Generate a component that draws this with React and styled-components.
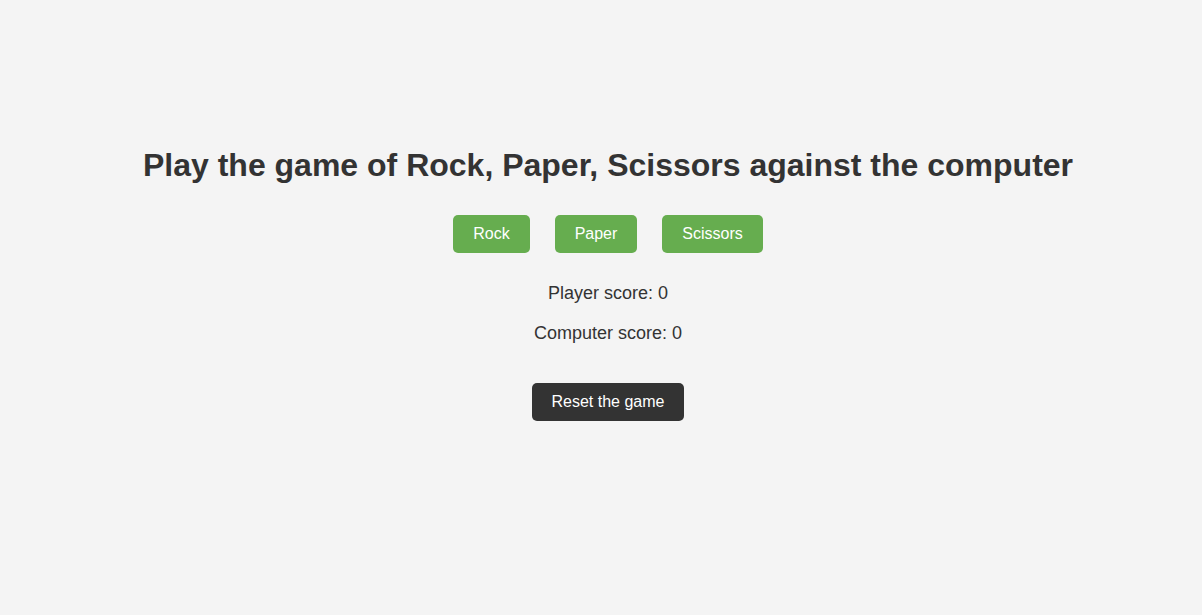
import React, { useState } from "react";
import styled, { createGlobalStyle } from "styled-components";

const GlobalStyle = createGlobalStyle`
  html, body {
    margin: 0;
    padding: 0;
    background: #f4f4f4;
  }
  body {
    font-family: "Liberation Sans", Arial, sans-serif;
    color: #333;
    line-height: 1.2;
  }
`;

const Page = styled.main`
  min-height: 615px;
  box-sizing: border-box;
  padding: 146px 0 0 14px;
  display: flex;
  flex-direction: column;
  align-items: center;
  text-align: center;
`;

const Title = styled.h1`
  margin: 0 0 31px;
  font-size: 32px;
  line-height: 38px;
  font-weight: bold;
  color: #333;
`;

const ButtonRow = styled.div`
  display: flex;
  gap: 25px;
  margin-bottom: 29px;
`;

const Button = styled.button`
  font-family: "Liberation Sans", Arial, sans-serif;
  font-size: 16px;
  line-height: 18px;
  padding: 10px 20px;
  border: none;
  border-radius: 5px;
  color: #fff;
  background: ${(p) => (p.$dark ? "#333333" : "#66ad4f")};
  cursor: pointer;
`;

const Scores = styled.div`
  display: flex;
  flex-direction: column;
  gap: 18px;
  margin-bottom: 39px;
`;

const Score = styled.p`
  margin: 0;
  font-size: 18px;
  line-height: 22px;
  color: #333;
`;

export default function App() {
  const [player, setPlayer] = useState(0);
  const [computer, setComputer] = useState(0);
  const choices = ["Rock", "Paper", "Scissors"];

  const play = (i) => {
    const c = Math.floor(Math.random() * 3);
    if (c === i) return;
    if ((i - c + 3) % 3 === 1) setPlayer((v) => v + 1);
    else setComputer((v) => v + 1);
  };

  return (
    <>
      <GlobalStyle />
      <Page>
        <Title>Play the game of Rock, Paper, Scissors against the computer</Title>
        <ButtonRow>
          {choices.map((c, i) => (
            <Button key={c} onClick={() => play(i)}>
              {c}
            </Button>
          ))}
        </ButtonRow>
        <Scores>
          <Score>Player score: {player}</Score>
          <Score>Computer score: {computer}</Score>
        </Scores>
        <Button
          $dark
          onClick={() => {
            setPlayer(0);
            setComputer(0);
          }}
        >
          Reset the game
        </Button>
      </Page>
    </>
  );
}
